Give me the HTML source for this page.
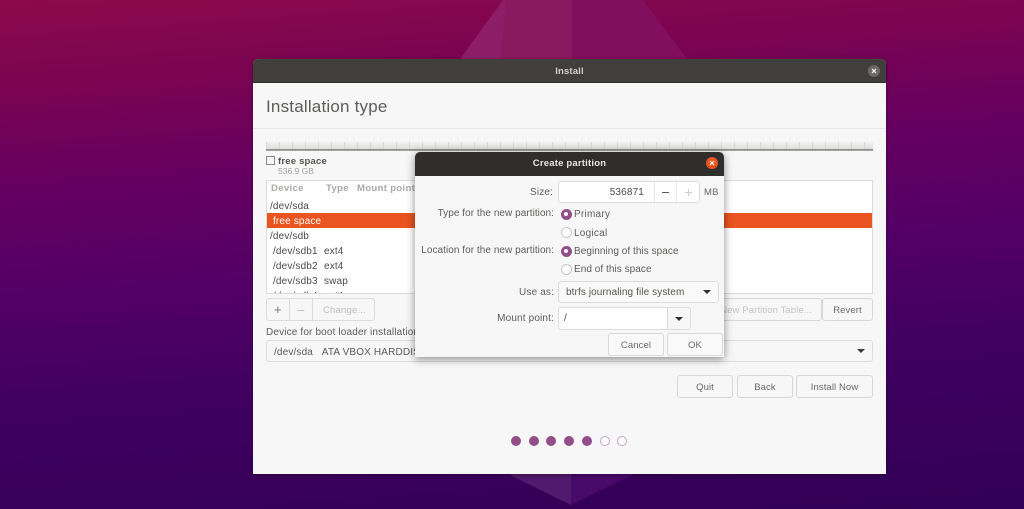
<!DOCTYPE html>
<html><head><meta charset="utf-8">
<style>
html,body{margin:0;padding:0;width:1024px;height:509px;overflow:hidden;background:#4a0060}
*{box-sizing:border-box}
#root{position:relative;width:1024px;height:509px;overflow:hidden;font-family:"Liberation Sans",sans-serif;color:#4a4a48;filter:blur(.35px);
background:linear-gradient(176deg,#8c0a4c 0,#7c0450 14%,#660060 32%,#520066 52%,#3f0060 72%,#320056 100%)}
.a{position:absolute;white-space:nowrap}
.t{font-size:10px;line-height:12px;letter-spacing:.15px}
.r{text-align:right}
.btn{position:absolute;background:#f7f7f7;border:1px solid #d8d8d6;border-radius:3px;font-size:9.5px;line-height:23px;text-align:center;color:#6a6a68;letter-spacing:.1px}
.dot{position:absolute;top:436px;width:10px;height:10px;border-radius:50%;background:#924d8b}
.dot.o{background:#fff;border:1px solid #c9a0c5}
.radio{position:absolute;left:560.5px;width:11px;height:11px;border-radius:50%;background:#fff;border:1px solid #c8c8c6}
.radio.on{background:#924d8b;border:0}
.radio.on:after{content:"";position:absolute;left:3.5px;top:3.5px;width:4px;height:4px;border-radius:50%;background:#fff}
.tri{position:absolute;width:0;height:0;border-left:4px solid transparent;border-right:4px solid transparent;border-top:4px solid #3a3a38}
</style></head><body><div id="root">
<svg class="a" style="left:0;top:0" width="1024" height="509">
<polygon points="460,59 503,0 572,0 572,59" fill="#8c1d66"/>
<polygon points="500,59 506,0 572,0 572,59" fill="#8a195f"/>
<polygon points="572,59 572,0 643,0 687,59" fill="#820e5e"/>
<polygon points="510,474 514,477 571,505 571,474" fill="#521a6c"/>
<polygon points="571,474 571,505 628,477 633,474" fill="#480a6a"/>
</svg>

<!-- Main window -->
<div class="a" style="left:253px;top:59px;width:633px;height:415px;background:#f7f7f7;border-radius:5px 5px 0 0;box-shadow:0 1px 4px rgba(0,0,0,.35)">
  <div class="a" style="left:0;top:0;width:633px;height:24px;background:#403f3c;border-radius:5px 5px 0 0;border-bottom:1px solid #2f2e2c"></div>
</div>
<div class="a t" style="left:253px;top:66px;width:633px;text-align:center;color:#cfcfcd;font-weight:bold;font-size:9.5px">Install</div>
<div class="a" style="left:868px;top:65px;width:12px;height:12px;border-radius:50%;background:#6a6967"></div>
<svg class="a" style="left:868px;top:65px" width="12" height="12"><path d="M4 4L8 8M8 4L4 8" stroke="#eee" stroke-width="1.3"/></svg>

<div class="a" style="left:266px;top:97px;font-size:17px;line-height:20px;color:#5c5c5a;letter-spacing:.2px">Installation type</div>
<div class="a" style="left:253px;top:128px;width:633px;height:1px;background:#e8e8e6"></div>

<!-- partition bar -->
<div class="a" style="left:266px;top:142px;width:607px;height:7px;background:repeating-linear-gradient(90deg,#d6d6d4 0,#d6d6d4 1px,transparent 1px,transparent 13px),linear-gradient(#f2f2f0,#dedede)"></div>
<div class="a" style="left:266px;top:149px;width:607px;height:2px;background:linear-gradient(#8c8c8a,#a8a8a6)"></div>

<div class="a" style="left:266px;top:156px;width:9px;height:9px;border:1px solid #8a8a88;background:#f7f7f7"></div>
<div class="a t" style="left:278px;top:156px;font-weight:bold;color:#55554f;font-size:9.5px;letter-spacing:.2px">free space</div>
<div class="a" style="left:278px;top:166px;font-size:8.5px;line-height:11px;color:#a2a2a0">536.9 GB</div>

<!-- table -->
<div class="a" style="left:266px;top:180px;width:607px;height:114px;background:#fff;border:1px solid #dcdcda;overflow:hidden">
  <div class="a t" style="left:4px;top:2px;font-weight:bold;color:#a8a8a6;font-size:9.5px;letter-spacing:.35px">Device</div>
  <div class="a t" style="left:59px;top:2px;font-weight:bold;color:#a8a8a6;font-size:9.5px;letter-spacing:.35px">Type</div>
  <div class="a t" style="left:90px;top:2px;font-weight:bold;color:#a8a8a6;font-size:9.5px;letter-spacing:.35px">Mount point</div>
  <div class="a" style="left:0;top:32px;width:605px;height:15px;background:#e95420"></div>
  <div class="a t" style="left:3px;top:20px">/dev/sda</div>
  <div class="a t" style="left:6px;top:35px;color:#fff">free space</div>
  <div class="a t" style="left:3px;top:50px">/dev/sdb</div>
  <div class="a t" style="left:6px;top:65px">/dev/sdb1</div><div class="a t" style="left:57px;top:65px">ext4</div>
  <div class="a t" style="left:6px;top:80px">/dev/sdb2</div><div class="a t" style="left:57px;top:80px">ext4</div>
  <div class="a t" style="left:6px;top:95px">/dev/sdb3</div><div class="a t" style="left:57px;top:95px">swap</div>
  <div class="a t" style="left:6px;top:110px">/dev/sdb4</div><div class="a t" style="left:57px;top:110px">ext4</div>
</div>

<!-- toolbar -->
<div class="a" style="left:266px;top:298px;width:109px;height:23px;border:1px solid #dcdcda;border-radius:3px;background:#f7f7f7"></div>
<div class="a" style="left:289px;top:299px;width:1px;height:21px;background:#dcdcda"></div>
<div class="a" style="left:312px;top:299px;width:1px;height:21px;background:#dcdcda"></div>
<div class="a" style="left:274px;top:302px;font-size:13px;line-height:15px;color:#777">+</div>
<div class="a" style="left:297px;top:302px;font-size:13px;line-height:15px;color:#bbb">–</div>
<div class="a" style="left:323px;top:305px;font-size:9.5px;line-height:12px;color:#bdbdbb;letter-spacing:.2px">Change...</div>
<div class="a t" style="left:266px;top:327px;color:#5c5c5a">Device for boot loader installation:</div>

<div class="a" style="left:266px;top:340px;width:607px;height:22px;border:1px solid #dcdcda;border-radius:3px;background:#f7f7f7"></div>
<div class="a t" style="left:274px;top:347px;color:#5a5a58">/dev/sda&nbsp;&nbsp;&nbsp;ATA VBOX HARDDISK</div>
<div class="tri" style="left:857px;top:349px"></div>

<div class="btn" style="left:700px;top:298px;width:122px;height:23px;color:#c4c4c2;text-align:right;padding-right:9px">New Partition Table...</div>
<div class="btn" style="left:822px;top:298px;width:51px;height:23px">Revert</div>

<div class="btn" style="left:677px;top:375px;width:56px;height:23px">Quit</div>
<div class="btn" style="left:737px;top:375px;width:56px;height:23px">Back</div>
<div class="btn" style="left:796px;top:375px;width:77px;height:23px">Install Now</div>

<div class="dot" style="left:511px"></div>
<div class="dot" style="left:529px"></div>
<div class="dot" style="left:546px"></div>
<div class="dot" style="left:564px"></div>
<div class="dot" style="left:582px"></div>
<div class="dot o" style="left:600px"></div>
<div class="dot o" style="left:617px"></div>

<!-- Dialog -->
<div class="a" style="left:415px;top:152px;width:309px;height:205px;background:#f7f7f7;border-radius:5px 5px 0 0;box-shadow:0 2px 9px rgba(0,0,0,.45)"></div>
<div class="a" style="left:415px;top:152px;width:309px;height:24px;background:#302e2d;border-radius:5px 5px 0 0"></div>
<div class="a t" style="left:415px;top:158px;width:309px;text-align:center;color:#e6e6e4;font-weight:bold;font-size:9.5px;letter-spacing:.2px">Create partition</div>
<div class="a" style="left:706px;top:157px;width:12px;height:12px;border-radius:50%;background:#e95420"></div>
<svg class="a" style="left:706px;top:157px" width="12" height="12"><path d="M4 4L8 8M8 4L4 8" stroke="#fff" stroke-width="1.2"/></svg>

<div class="a t r" style="left:415px;top:187px;width:138px;color:#5c5c5a">Size:</div>
<div class="a" style="left:558px;top:181px;width:142px;height:22px;background:#fff;border:1px solid #dcdcda;border-radius:3px"></div>
<div class="a" style="left:654px;top:182px;width:1px;height:20px;background:#e6e6e4"></div>
<div class="a" style="left:676px;top:182px;width:1px;height:20px;background:#e6e6e4"></div>
<div class="a t r" style="left:590px;top:187px;width:54px;color:#4a4a48">536871</div>
<div class="a" style="left:662px;top:192px;width:7px;height:1px;background:#555"></div>
<div class="a" style="left:685px;top:192px;width:7px;height:1px;background:#ccc"></div>
<div class="a" style="left:688px;top:189px;width:1px;height:7px;background:#ccc"></div>
<div class="a t" style="left:704px;top:187px;color:#6a6a68;font-size:9.5px">MB</div>

<div class="a t r" style="left:415px;top:208px;width:139px;color:#5c5c5a;letter-spacing:.05px">Type for the new partition:</div>
<div class="radio on" style="top:208.5px"></div><div class="a t" style="left:574px;top:209px;color:#5c5c5a;letter-spacing:.25px">Primary</div>
<div class="radio" style="top:227px"></div><div class="a t" style="left:574px;top:228px;color:#5c5c5a;letter-spacing:.25px">Logical</div>
<div class="a t r" style="left:415px;top:245px;width:139px;color:#5c5c5a;letter-spacing:.05px">Location for the new partition:</div>
<div class="radio on" style="top:245.5px"></div><div class="a t" style="left:574px;top:246px;color:#5c5c5a;letter-spacing:.05px">Beginning of this space</div>
<div class="radio" style="top:264px"></div><div class="a t" style="left:574px;top:264px;color:#5c5c5a;letter-spacing:.05px">End of this space</div>

<div class="a t r" style="left:415px;top:287px;width:139px;color:#5c5c5a">Use as:</div>
<div class="a" style="left:558px;top:281px;width:161px;height:22px;background:#f9f9f9;border:1px solid #dcdcda;border-radius:3px"></div>
<div class="a t" style="left:566px;top:287px;color:#55554f;letter-spacing:.1px">btrfs journaling file system</div>
<div class="tri" style="left:703px;top:290px;border-top-color:#2e2e2c"></div>

<div class="a t r" style="left:415px;top:313px;width:139px;color:#5c5c5a">Mount point:</div>
<div class="a" style="left:558px;top:307px;width:133px;height:23px;background:#fff;border:1px solid #dcdcda;border-radius:3px"></div>
<div class="a" style="left:667px;top:308px;width:1px;height:21px;background:#d8d8d6"></div>
<div class="a" style="left:668px;top:308px;width:22px;height:21px;background:#f7f7f7;border-radius:0 3px 3px 0"></div>
<div class="a t" style="left:564px;top:313px;color:#4a4a48">/</div>
<div class="tri" style="left:675px;top:317px;border-top-color:#2e2e2c"></div>

<div class="btn" style="left:608px;top:333px;width:56px;height:23px;background:#f9f9f9">Cancel</div>
<div class="btn" style="left:667px;top:333px;width:56px;height:23px;background:#f9f9f9">OK</div>
</div></body></html>
